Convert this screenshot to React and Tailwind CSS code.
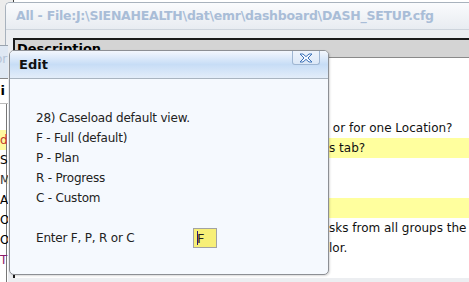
import React from 'react';

const font = { fontFamily: '"DejaVu Sans", sans-serif' };

// underlying grid rows: hidden part sits under the dialog, tail peeks out
const rows = [
  { pre: '', tail: '' },
  { pre: '', tail: '' },
  { pre: '', tail: '' },
  { pre: 'Show the dashboard for all Locations', tail: ' or for one Location?' },
  { pre: 'Which view should open on the Task', tail: 's tab?', hl: true },
  { pre: '', tail: '' },
  { pre: '', tail: '' },
  { pre: '', tail: '', hl: true },
  { pre: 'When checked, the list shows the ta', tail: 'sks from all groups the current user' },
  { pre: 'is in, each group in its own co', tail: 'lor.' },
  { pre: '', tail: '' },
];

const backRows = [
  { ch: 'd', cls: 'text-[#c0392b] bg-[#fff9a0]' },
  { ch: 'S', cls: 'text-black' },
  { ch: 'M', cls: 'text-[#333]' },
  { ch: 'A', cls: 'text-black' },
  { ch: 'O', cls: 'text-black' },
  { ch: 'O', cls: 'text-black' },
  { ch: 'T', cls: 'text-[#8b1a6b]' },
];

const CloseIcon = () => (
  <svg width="16" height="10" viewBox="0 0 16 10">
    <path
      d="M2 1 H5 L8 3.6 L11 1 H14 L10 5 L14 9 H11 L8 6.4 L5 9 H2 L6 5 Z"
      fill="#f4f8fe"
      stroke="#3d72b8"
      strokeWidth="1"
      strokeLinejoin="round"
    />
  </svg>
);

export default function App() {
  return (
    <div className="relative w-[469px] h-[282px] overflow-hidden bg-white" style={font}>
      {/* top of the window behind */}
      <div className="absolute left-0 top-0 w-[14px] h-[45px] bg-[#ececec] border-r border-[#444]" />

      {/* main "All" window */}
      <div className="absolute left-[5px] top-[2px] w-[480px] h-[300px] rounded-tl-[5px] border-l border-t border-[#a8b2bd] bg-[#eceef1] overflow-hidden">
        <div className="h-[27px] bg-gradient-to-b from-[#fafbfd] to-[#e8ecf1] border-b border-[#cdd4dc] flex items-center pl-[10px]">
          <span className="text-[12.5px] font-bold text-[#a9bdd7] whitespace-nowrap tracking-[-0.25px]">
            All - File:J:\SIENAHEALTH\dat\emr\dashboard\DASH_SETUP.cfg
          </span>
        </div>
        <div className="pt-[8px] pl-[7px]">
          <div className="bg-white border-l-2 border-t-2 border-[#1a1a1a]">
            <div className="h-[18px] bg-[#d4d4d4] border-b border-[#8a8a8a] text-[13px] font-bold leading-[18px] pl-[2px] text-black">
              Description
            </div>
            {rows.map((r, i) => (
              <div
                key={i}
                className={`h-[20px] flex text-[12px] leading-[20px] whitespace-nowrap text-[#111] ${
                  r.hl ? 'bg-[#ffff9e]' : ''
                }`}
              >
                <span className="w-[314px] shrink-0 overflow-hidden text-right">{r.pre}</span>
                <span className="whitespace-pre">{r.tail}</span>
              </div>
            ))}
          </div>
        </div>
      </div>

      {/* left strip of the back window, shown over the All frame */}
      <div className="absolute left-0 top-[45px] w-[8px] h-[237px] bg-white overflow-hidden">
        <div className="h-[33px] bg-[#dfe8f3] border-t border-[#9aa3ad] text-[12px] text-[#b4c3d6] leading-[26px]">
          <span className="-ml-[5px]">or</span>
        </div>
        <div className="h-[26px] border-t border-[#888] border-b border-b-[#bbb] text-[13px] font-bold leading-[24px] text-black whitespace-nowrap">
          <span className="-ml-[4px]">ji</span>
        </div>
        <div className="pt-[26px] border-r border-[#777] w-[7px] h-full">
          {backRows.map((r, i) => (
            <div key={i} className={`h-[20px] text-[12px] leading-[20px] whitespace-nowrap ${r.cls}`}>
              {r.ch}
            </div>
          ))}
        </div>
      </div>

      {/* Edit dialog */}
      <div className="absolute left-[9px] top-[50px] w-[320px] h-[225px] rounded-[5px] border border-[#8c8f94] bg-[#f5f9fe] overflow-hidden shadow-[1px_1px_2px_rgba(0,0,0,0.15)]">
        <div className="relative h-[28px] bg-gradient-to-b from-[#f3f7fd] via-[#c7ddf6] to-[#e3edf9] border-b border-[#a9b4c0] flex items-center pl-[9px]">
          <span className="text-[13px] font-bold text-[#111]">Edit</span>
          <div className="absolute right-[8px] top-0 w-[28px] h-[14px] border border-t-0 border-[#9fb6d2] rounded-b-[3px] bg-gradient-to-b from-[#eef4fc] to-[#dce8f7] flex items-center justify-center">
            <CloseIcon />
          </div>
        </div>
        <div className="pl-[26px] pt-[29px] text-[12px] leading-[20px] text-[#222] tracking-[-0.2px]">
          <div>28) Caseload default view.</div>
          <div>F - Full (default)</div>
          <div>P - Plan</div>
          <div>R - Progress</div>
          <div>C - Custom</div>
          <div className="h-[20px]" />
          <div className="flex items-center h-[20px]">
            <span className="w-[157px]">Enter F, P, R or C</span>
            <div className="w-[24px] h-[20px] bg-[#f7ef77] border border-[#a3a3a3] flex items-center pl-[3px]">
              <span className="w-[1px] h-[14px] bg-[#2a1a7a]" />
              <span className="text-[13px] text-[#222] -ml-[1px] leading-none">F</span>
            </div>
          </div>
        </div>
      </div>
    </div>
  );
}
